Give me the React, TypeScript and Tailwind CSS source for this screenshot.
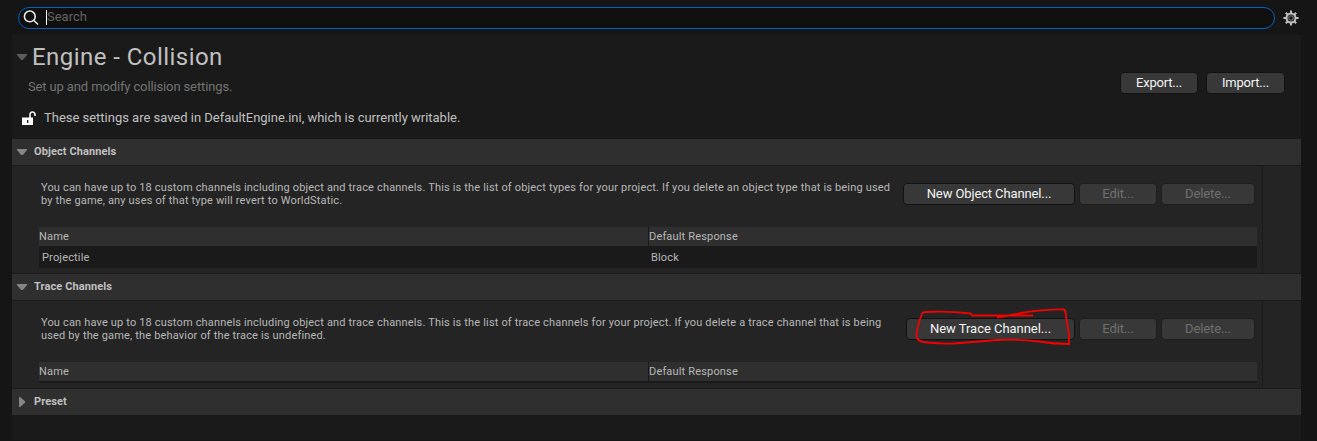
import type { ReactNode } from 'react';

function Arrow({ open = true, dim = false }: { open?: boolean; dim?: boolean }) {
  return (
    <svg viewBox="0 0 10 10" className={`size-[10px] shrink-0 ${dim ? 'fill-[#5c5c5c]' : 'fill-[#868686]'}`}>
      <path d={open ? 'M0 2H10V3L5.8 8H4.2L0 3Z' : 'M2 0H3L8 4.2V5.8L3 10H2Z'} />
    </svg>
  );
}

function Button({ children, width, disabled = false }: { children: ReactNode; width: string; disabled?: boolean }) {
  return (
    <button
      disabled={disabled}
      className={`flex h-[22px] shrink-0 items-center justify-center rounded-[4px] border bg-[#383838] pb-px text-[13px] whitespace-nowrap ${width} ${
        disabled ? 'border-[#1e1e1e] text-[#6f6f6f]' : 'border-[#121212] text-[#f4f4f4]'
      }`}
    >
      {children}
    </button>
  );
}

function SectionHeader({ title, open = true }: { title: string; open?: boolean }) {
  return (
    <div className="flex h-[26px] items-center gap-[7px] bg-[#2f2f2f] pl-[5px]">
      <Arrow open={open} />
      <h2 className="text-[11px] leading-[14px] font-bold tracking-[0.1px] text-[#c0c0c0]">{title}</h2>
    </div>
  );
}

interface ChannelProps {
  title: string;
  lines: [string, string];
  action: ReactNode;
  rows: { name: string; response: string }[];
}

function ChannelSection({ title, lines, action, rows }: ChannelProps) {
  return (
    <section className="border-b border-[#1a1a1a]">
      <SectionHeader title={title} />
      <div className="flex border-t border-[#1a1a1a] bg-[#242424] text-[11px] tracking-[0.166px] text-[#b8b8b8]">
        <div className="w-[1250px] shrink-0 pr-[5px] pb-[5px] pl-[27px]">
          <div className="flex h-[61px] items-start justify-between pt-[15px] pr-[2px] pl-[2px]">
            <p className="leading-[13px] whitespace-nowrap">
              {lines[0]}
              <br />
              {lines[1]}
            </p>
            <div className="mt-[2px] flex gap-1 tracking-[-0.12px]">
              {action}
              <Button width="w-[78px]" disabled>Edit...</Button>
              <Button width="w-[94px]" disabled>Delete...</Button>
            </div>
          </div>
          <div className="flex h-[19px] items-center bg-[#2f2f2f]">
            <div className="h-full w-[609px] leading-[19px]">Name</div>
            <div className="h-full flex-1 border-l border-[#1a1a1a] leading-[19px]">Default Response</div>
          </div>
          {rows.length === 0 && <div className="h-[2px] bg-[#1a1a1a]" />}
          {rows.map((row) => (
            <div key={row.name} className="flex h-[22px] bg-[#1a1a1a] pt-px leading-[21px]">
              <div className="w-[609px] pl-[3px]">{row.name}</div>
              <div className="pl-[3px]">{row.response}</div>
            </div>
          ))}
        </div>
        <div className="flex-1 border-l border-[#1a1a1a]" />
      </div>
    </section>
  );
}

function SearchBar() {
  return (
    <div className="flex h-[35px] items-start pt-[7px] pl-[18px]">
      <div className="flex h-[22px] w-[1257px] items-center rounded-full border border-[#0063c0] bg-[#0f0f0f] pl-[4px]">
        <svg viewBox="0 0 16 16" className="size-4 fill-none stroke-[#e8e8e8] stroke-[1.6]">
          <circle cx="6.8" cy="6.4" r="5.4" />
          <path d="M10.7 10.3L15 14.5" />
        </svg>
        <span className="-mt-[2px] ml-[7px] h-[15px] w-px bg-white" />
        <span className="-mt-[2px] text-[13px] text-[#636363]">Search</span>
      </div>
      <svg viewBox="-8 -8 16 16" className="mt-[3px] ml-2 size-4 stroke-[#c0c0c0]">
        <path
          d="M0 -7.6V7.6M-7.6 0H7.6M-5.2 -5.2L5.2 5.2M-5.2 5.2L5.2 -5.2"
          className="stroke-[2]"
        />
        <circle r="4.5" className="fill-[#151515] stroke-[2]" />
        <circle r="2.2" className="fill-[#151515] stroke-[#777777] stroke-[1.1]" />
      </svg>
    </div>
  );
}

export default function App() {
  return (
    <main className="h-[441px] w-[1317px] overflow-hidden bg-[#151515] font-['Roboto',sans-serif]">
      <SearchBar />
      <div className="ml-3 h-[405px] w-[1289px] bg-[#1a1a1a]">
        <header className="flex h-[104px] justify-between pr-4">
          <div className="whitespace-nowrap">
            <div className="flex h-[43px] items-center gap-[5px] pl-[5px]">
              <Arrow dim />
              <h1 className="text-[24px] tracking-[0.45px] text-[#c0c0c0]">Engine - Collision</h1>
            </div>
            <p className="mt-[1px] pl-4 text-[13px] leading-[16px] tracking-[-0.13px] text-[#737373]">Set up and modify collision settings.</p>
            <div className="mt-[15px] flex h-4 items-center gap-2 pl-[10px]">
              <svg viewBox="0 0 14 14" className="size-[14px]">
                <path d="M8 7V4Q8 1 10.5 1T13 4V5" className="fill-none stroke-[#eeeeee] stroke-[1.7]" />
                <path d="M0 6.5H11V14H0Z" className="fill-white" />
                <path d="M5 9H6.3V12H5Z" className="fill-[#1a1a1a]" />
              </svg>
              <p className="text-[13px] tracking-[-0.015px] text-[#c0c0c0]">These settings are saved in DefaultEngine.ini, which is currently writable.</p>
            </div>
          </div>
          <div className="mt-[37px] flex gap-2 tracking-[-0.2px]">
            <Button width="w-[78px]">Export...</Button>
            <Button width="w-[79px]">Import...</Button>
          </div>
        </header>
        <ChannelSection
          title="Object Channels"
          lines={[
            'You can have up to 18 custom channels including object and trace channels. This is the list of object types for your project. If you delete an object type that is being used',
            'by the game, any uses of that type will revert to WorldStatic.',
          ]}
          action={<Button width="w-[172px]">New Object Channel...</Button>}
          rows={[{ name: 'Projectile', response: 'Block' }]}
        />
        <ChannelSection
          title="Trace Channels"
          lines={[
            'You can have up to 18 custom channels including object and trace channels. This is the list of trace channels for your project. If you delete a trace channel that is being',
            'used by the game, the behavior of the trace is undefined.',
          ]}
          action={
            <div className="relative tracking-[-0.03px]">
              <Button width="w-[169px]">New Trace Channel...</Button>
              <svg viewBox="0 0 169 44" className="pointer-events-none absolute -top-[11px] left-0 h-[44px] w-[169px] fill-none stroke-[#f40000] stroke-[1.8]">
                <path d="M65 6.5L66 8.5H127M91 10.5Q106 8 121 5Q143 2 158 2.5Q160 4 160 10L163 27V37Q148 37 133 34.5Q112 32 91 33Q66 35 48 36.500Q34 37 22 35.500Q10 35 10.500 28Q12 16 16 7Q16 5 20 5Q42 4 65 6.500" />
              </svg>
            </div>
          }
          rows={[]}
        />
        <SectionHeader title="Preset" open={false} />
      </div>
    </main>
  );
}
